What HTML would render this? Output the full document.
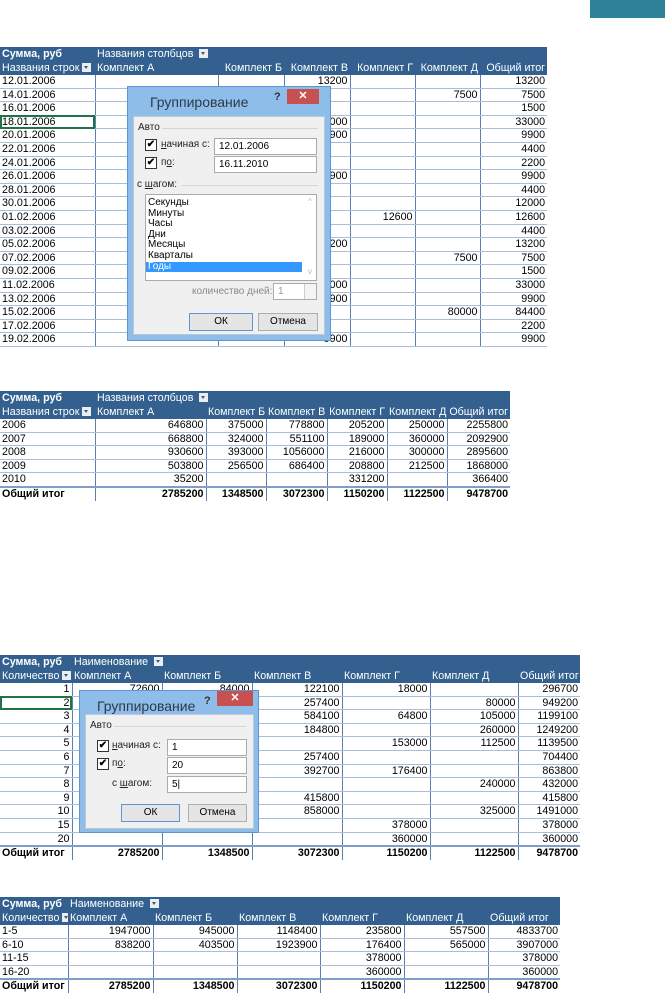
<!DOCTYPE html>
<html><head><meta charset="utf-8"><style>
body{margin:0;width:665px;height:994px;position:relative;background:#fff;overflow:hidden;font-family:"Liberation Sans",Arial,sans-serif;font-size:10.7px;color:#000}
.t{position:absolute;border-collapse:collapse;table-layout:fixed}
.t td{padding:0 2px;height:12.6px;line-height:12.6px;white-space:nowrap;overflow:hidden;border-left:1px solid #5b7fb0;border-bottom:1px solid #a8bfdc;text-align:right;font-size:10.7px}
.t td:first-child{text-align:left;border-left:none}
.t tr.h td{background:#33608f;color:#fff;border:none;text-align:left;height:14px;line-height:14px}
.t tr.h td.r{text-align:right}
.t tr.h b{font-weight:bold}
.t tr.tot td{font-weight:bold;border-top:2px solid #7f9fcb;border-bottom:none}
.dd{display:inline-block;width:9px;height:9px;background:#e8eef6;vertical-align:-1px;position:relative;margin-left:3px}
.dd:after{content:"";position:absolute;left:2px;top:3px;border-left:2.5px solid transparent;border-right:2.5px solid transparent;border-top:3px solid #555}
.dlg{position:absolute;background:#8ebde9;border:1px solid #5e95d2;box-sizing:border-box}
.dlg .ttl{position:absolute;font-size:14px;color:#2b3a4a}
.dlg .q{position:absolute;font-size:11px;font-weight:bold;color:#333}
.dlg .x{position:absolute;background:#c75050;color:#fff;text-align:center;font-size:11px;font-weight:bold;line-height:14px}
.pn{position:absolute;background:#f0f0f0;border:1px solid #b9c9da}
.a{position:absolute;font-size:10px;color:#222;white-space:nowrap}
.ln{position:absolute;height:1px;background:#d5d5d5}
.cb{position:absolute;width:10px;height:10px;border:1px solid #333;background:#fff;font-size:10px;line-height:10px;text-align:center;font-weight:bold}
.in{position:absolute;background:#fff;border:1px solid #ababab;font-size:10px;line-height:15px;padding-left:4px;box-sizing:border-box}
.bt{position:absolute;background:#e5e5e5;border:1px solid #adadad;font-size:10px;text-align:center;box-sizing:border-box}
</style></head><body>
<div style="position:absolute;left:590px;top:0;width:75px;height:18px;background:#2e8197"></div>

<!-- Table 1 -->
<table class="t" style="left:0;top:47px;width:547px">
<colgroup><col style="width:95px"><col style="width:123px"><col style="width:66px"><col style="width:66px"><col style="width:65px"><col style="width:65px"><col style="width:67px"></colgroup>
<tr class="h"><td><b>Сумма, руб</b></td><td colspan="6">Названия столбцов <span class="dd"></span></td></tr>
<tr class="h"><td>Названия строк<span class="dd"></span></td><td>Комплект А</td><td class="r">Комплект Б</td><td class="r">Комплект В</td><td class="r">Комплект Г</td><td class="r">Комплект Д</td><td class="r">Общий итог</td></tr>
<tr><td>12.01.2006</td><td></td><td></td><td>13200</td><td></td><td></td><td>13200</td></tr>
<tr><td>14.01.2006</td><td></td><td></td><td></td><td></td><td>7500</td><td>7500</td></tr>
<tr><td>16.01.2006</td><td></td><td></td><td></td><td></td><td></td><td>1500</td></tr>
<tr><td style="outline:2px solid #217346;outline-offset:-2px">18.01.2006</td><td></td><td></td><td>33000</td><td></td><td></td><td>33000</td></tr>
<tr><td>20.01.2006</td><td></td><td></td><td>9900</td><td></td><td></td><td>9900</td></tr>
<tr><td>22.01.2006</td><td></td><td></td><td></td><td></td><td></td><td>4400</td></tr>
<tr><td>24.01.2006</td><td></td><td></td><td></td><td></td><td></td><td>2200</td></tr>
<tr><td>26.01.2006</td><td></td><td></td><td>9900</td><td></td><td></td><td>9900</td></tr>
<tr><td>28.01.2006</td><td></td><td></td><td></td><td></td><td></td><td>4400</td></tr>
<tr><td>30.01.2006</td><td></td><td></td><td></td><td></td><td></td><td>12000</td></tr>
<tr><td>01.02.2006</td><td></td><td></td><td></td><td>12600</td><td></td><td>12600</td></tr>
<tr><td>03.02.2006</td><td></td><td></td><td></td><td></td><td></td><td>4400</td></tr>
<tr><td>05.02.2006</td><td></td><td></td><td>13200</td><td></td><td></td><td>13200</td></tr>
<tr><td>07.02.2006</td><td></td><td></td><td></td><td></td><td>7500</td><td>7500</td></tr>
<tr><td>09.02.2006</td><td></td><td></td><td></td><td></td><td></td><td>1500</td></tr>
<tr><td>11.02.2006</td><td></td><td></td><td>33000</td><td></td><td></td><td>33000</td></tr>
<tr><td>13.02.2006</td><td></td><td></td><td>9900</td><td></td><td></td><td>9900</td></tr>
<tr><td>15.02.2006</td><td></td><td></td><td></td><td></td><td>80000</td><td>84400</td></tr>
<tr><td>17.02.2006</td><td></td><td></td><td></td><td></td><td></td><td>2200</td></tr>
<tr><td>19.02.2006</td><td></td><td></td><td>9900</td><td></td><td></td><td>9900</td></tr>
</table>

<!-- Dialog 1 -->
<div class="dlg" style="left:127px;top:86px;width:204px;height:255px">
<div class="ttl" style="left:22px;top:7px">Группирование</div>
<div class="q" style="left:146px;top:4px">?</div>
<div class="x" style="left:159px;top:2px;width:32px;height:15px">✕</div>
<div class="pn" style="left:5px;top:29px;width:190px;height:217px">
<div class="a" style="left:4px;top:5px">Авто</div><div class="ln" style="left:28px;top:11px;width:156px"></div>
<div class="cb" style="left:11px;top:22px">✔</div><div class="a" style="left:27px;top:22px"><u>н</u>ачиная с:</div>
<div class="in" style="left:80px;top:21px;width:103px;height:17px">12.01.2006</div>
<div class="cb" style="left:11px;top:40px">✔</div><div class="a" style="left:27px;top:40px">п<u>о</u>:</div>
<div class="in" style="left:80px;top:39px;width:103px;height:17px">16.11.2010</div>
<div class="a" style="left:3px;top:62px">с <u>ш</u>агом:</div><div class="ln" style="left:48px;top:68px;width:136px"></div>
<div class="in" style="left:11px;top:77px;width:172px;height:87px;line-height:10.6px;padding:3px 0 0 0">
<div style="padding-left:2px">Секунды</div><div style="padding-left:2px">Минуты</div><div style="padding-left:2px">Часы</div><div style="padding-left:2px">Дни</div><div style="padding-left:2px">Месяцы</div><div style="padding-left:2px">Кварталы</div><div style="background:#3399ff;color:#fff;width:154px;padding-left:2px">Годы</div>
<div style="position:absolute;right:4px;top:2px;color:#bbb;font-size:8px">^</div>
<div style="position:absolute;right:4px;bottom:2px;color:#bbb;font-size:8px">v</div></div>
<div class="a" style="left:58px;top:169px;color:#888">количество дней:</div>
<div class="in" style="left:139px;top:166px;width:44px;height:17px;color:#999">1<span style="position:absolute;right:0;top:0;width:11px;height:15px;border-left:1px solid #ccc;background:#f4f4f4"></span></div>
<div class="bt" style="left:55px;top:196px;width:64px;height:18px;line-height:16px;border-color:#5e95d2">ОК</div>
<div class="bt" style="left:124px;top:196px;width:60px;height:18px;line-height:16px">Отмена</div>
</div></div>

<!-- Table 2 -->
<table class="t" style="left:0;top:391px;width:510px">
<colgroup><col style="width:95px"><col style="width:111px"><col style="width:60px"><col style="width:61px"><col style="width:60px"><col style="width:60px"><col style="width:63px"></colgroup>
<tr class="h"><td><b>Сумма, руб</b></td><td colspan="6">Названия столбцов <span class="dd"></span></td></tr>
<tr class="h"><td>Названия строк<span class="dd"></span></td><td>Комплект А</td><td class="r">Комплект Б</td><td class="r">Комплект В</td><td class="r">Комплект Г</td><td class="r">Комплект Д</td><td class="r">Общий итог</td></tr>
<tr><td>2006</td><td>646800</td><td>375000</td><td>778800</td><td>205200</td><td>250000</td><td>2255800</td></tr>
<tr><td>2007</td><td>668800</td><td>324000</td><td>551100</td><td>189000</td><td>360000</td><td>2092900</td></tr>
<tr><td>2008</td><td>930600</td><td>393000</td><td>1056000</td><td>216000</td><td>300000</td><td>2895600</td></tr>
<tr><td>2009</td><td>503800</td><td>256500</td><td>686400</td><td>208800</td><td>212500</td><td>1868000</td></tr>
<tr><td>2010</td><td>35200</td><td></td><td></td><td>331200</td><td></td><td>366400</td></tr>
<tr class="tot"><td>Общий итог</td><td>2785200</td><td>1348500</td><td>3072300</td><td>1150200</td><td>1122500</td><td>9478700</td></tr>
</table>

<!-- Table 3 -->
<table class="t" style="left:0;top:655px;width:580px">
<colgroup><col style="width:72px"><col style="width:90px"><col style="width:90px"><col style="width:90px"><col style="width:88px"><col style="width:88px"><col style="width:62px"></colgroup>
<tr class="h"><td><b>Сумма, руб</b></td><td colspan="6">Наименование <span class="dd"></span></td></tr>
<tr class="h"><td>Количество<span class="dd"></span></td><td>Комплект А</td><td>Комплект Б</td><td>Комплект В</td><td>Комплект Г</td><td>Комплект Д</td><td class="r">Общий итог</td></tr>
<tr><td style="text-align:right">1</td><td>72600</td><td>84000</td><td>122100</td><td>18000</td><td></td><td>296700</td></tr>
<tr><td style="text-align:right;outline:2px solid #217346;outline-offset:-2px">2</td><td></td><td></td><td>257400</td><td></td><td>80000</td><td>949200</td></tr>
<tr><td style="text-align:right">3</td><td></td><td></td><td>584100</td><td>64800</td><td>105000</td><td>1199100</td></tr>
<tr><td style="text-align:right">4</td><td></td><td></td><td>184800</td><td></td><td>260000</td><td>1249200</td></tr>
<tr><td style="text-align:right">5</td><td></td><td></td><td></td><td>153000</td><td>112500</td><td>1139500</td></tr>
<tr><td style="text-align:right">6</td><td></td><td></td><td>257400</td><td></td><td></td><td>704400</td></tr>
<tr><td style="text-align:right">7</td><td></td><td></td><td>392700</td><td>176400</td><td></td><td>863800</td></tr>
<tr><td style="text-align:right">8</td><td></td><td></td><td></td><td></td><td>240000</td><td>432000</td></tr>
<tr><td style="text-align:right">9</td><td></td><td></td><td>415800</td><td></td><td></td><td>415800</td></tr>
<tr><td style="text-align:right">10</td><td></td><td></td><td>858000</td><td></td><td>325000</td><td>1491000</td></tr>
<tr><td style="text-align:right">15</td><td></td><td></td><td></td><td>378000</td><td></td><td>378000</td></tr>
<tr><td style="text-align:right">20</td><td></td><td></td><td></td><td>360000</td><td></td><td>360000</td></tr>
<tr class="tot"><td>Общий итог</td><td>2785200</td><td>1348500</td><td>3072300</td><td>1150200</td><td>1122500</td><td>9478700</td></tr>
</table>

<!-- Dialog 2 -->
<div class="dlg" style="left:79px;top:690px;width:180px;height:143px">
<div class="ttl" style="left:17px;top:7px">Группирование</div>
<div class="q" style="left:124px;top:4px">?</div>
<div class="x" style="left:137px;top:0px;width:36px;height:15px">✕</div>
<div class="pn" style="left:5px;top:23px;width:167px;height:113px">
<div class="a" style="left:4px;top:5px">Авто</div><div class="ln" style="left:28px;top:11px;width:132px"></div>
<div class="cb" style="left:11px;top:25px">✔</div><div class="a" style="left:26px;top:25px"><u>н</u>ачиная с:</div>
<div class="in" style="left:81px;top:24px;width:80px;height:17px">1</div>
<div class="cb" style="left:11px;top:43px">✔</div><div class="a" style="left:26px;top:43px">п<u>о</u>:</div>
<div class="in" style="left:81px;top:42px;width:80px;height:17px">20</div>
<div class="a" style="left:26px;top:63px">с <u>ш</u>агом:</div>
<div class="in" style="left:81px;top:61px;width:80px;height:17px">5|</div>
<div class="bt" style="left:35px;top:89px;width:59px;height:18px;line-height:16px;border-color:#5e95d2">ОК</div>
<div class="bt" style="left:102px;top:89px;width:59px;height:18px;line-height:16px">Отмена</div>
</div></div>

<!-- Table 4 -->
<table class="t" style="left:0;top:897px;width:560px">
<colgroup><col style="width:68px"><col style="width:85px"><col style="width:84px"><col style="width:83px"><col style="width:84px"><col style="width:84px"><col style="width:72px"></colgroup>
<tr class="h"><td><b>Сумма, руб</b></td><td colspan="6">Наименование <span class="dd"></span></td></tr>
<tr class="h"><td>Количество<span class="dd"></span></td><td>Комплект А</td><td>Комплект Б</td><td>Комплект В</td><td>Комплект Г</td><td>Комплект Д</td><td>Общий итог</td></tr>
<tr><td>1-5</td><td>1947000</td><td>945000</td><td>1148400</td><td>235800</td><td>557500</td><td>4833700</td></tr>
<tr><td>6-10</td><td>838200</td><td>403500</td><td>1923900</td><td>176400</td><td>565000</td><td>3907000</td></tr>
<tr><td>11-15</td><td></td><td></td><td></td><td>378000</td><td></td><td>378000</td></tr>
<tr><td>16-20</td><td></td><td></td><td></td><td>360000</td><td></td><td>360000</td></tr>
<tr class="tot"><td>Общий итог</td><td>2785200</td><td>1348500</td><td>3072300</td><td>1150200</td><td>1122500</td><td>9478700</td></tr>
</table>
</body></html>
